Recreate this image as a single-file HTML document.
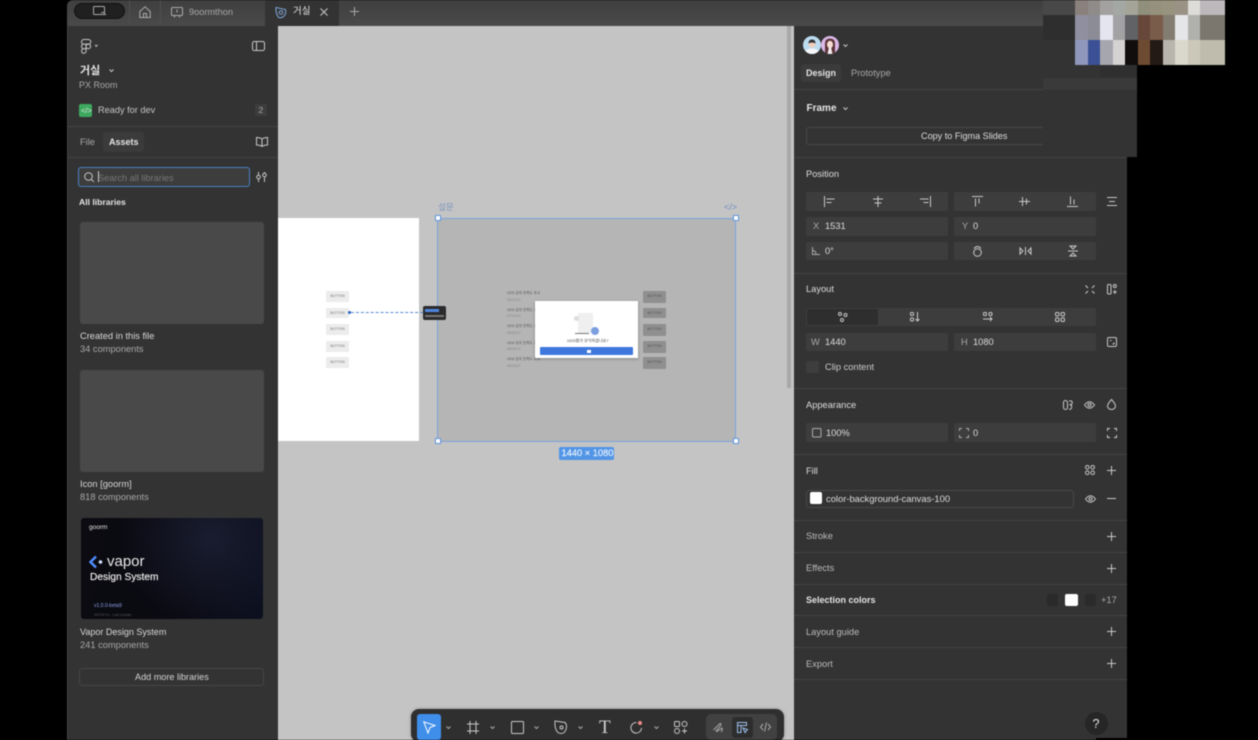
<!DOCTYPE html>
<html lang="ko"><head><meta charset="utf-8"><title>거실 – Figma</title>
<style>
*{box-sizing:border-box}
html,body{margin:0;padding:0;width:1258px;height:740px;background:#000;overflow:hidden}
#w{position:relative;width:1258px;height:740px;overflow:hidden;font-family:"Liberation Sans","Noto Sans CJK KR",sans-serif;filter:blur(.4px)}
.a{position:absolute}
.t{position:absolute;white-space:nowrap;line-height:12px;height:12px;font-size:9.300px;color:#c4c4c4}
.w{color:#e4e4e4}.g{color:#a8a8a8}.b{font-weight:bold}
.d{position:absolute;height:1px;background:#444}
.f{position:absolute;background:#3d3d3d;border-radius:2px}
svg{position:absolute;overflow:visible;fill:none;stroke:#c8c8c8;stroke-width:1}
.btn{position:absolute;background:#ececec;border-radius:1px;color:#777;font-size:3.500px;line-height:10px;text-align:center;width:23px;height:11px}
.gb{background:#8f8f8f;color:#555;height:12px}
.ln{position:absolute;left:507px;font-size:3.500px;color:#555;white-space:nowrap;line-height:5px}
.m{position:absolute}
</style></head><body><div id="w">

<!-- Tab bar -->
<div class="a" style="left:67px;top:0;width:1008px;height:26px;background:linear-gradient(#3f3f3f,#4a4a4a);border-top-left-radius:6px"></div>
<div class="a" style="left:74px;top:3px;width:51px;height:16px;background:#202020;border:1px solid #111;border-radius:8px"></div>
<svg style="left:93px;top:6px;stroke:#aaa" width="14" height="10"><rect x=".5" y=".5" width="11" height="8" rx="1"/><path d="M9 8.500h4M8 6.500h3"/></svg>
<div class="a" style="left:129px;top:0;width:1px;height:26px;background:#4f4f4f"></div>
<div class="a" style="left:160px;top:0;width:1px;height:26px;background:#4f4f4f"></div>
<svg style="left:139px;top:6px;stroke:#aaa" width="12" height="12"><path d="M.8 5.500 6 .8l5.200 4.700v6H.8zM4.500 11.500V7.500h3v4"/></svg>
<svg style="left:171px;top:7px;stroke:#aaa" width="12" height="11"><rect x=".5" y=".5" width="11" height="8" rx="1"/><path d="M6 2.500v3M3.500 8.500v2M8.500 8.500v2"/></svg>
<span class="t g" style="left:189px;top:6px;font-size:9.200px">9oormthon</span>
<div class="a" style="left:265px;top:0;width:74px;height:26px;background:#333"></div>
<svg style="left:275px;top:6px;stroke:#7fa6d8" width="12" height="12"><path d="M1 1.500 10.500 3.500q1 4-1.500 6.500t-5.500 1.500Q.5 7 1 1.500z"/><circle cx="6" cy="6.500" r="1.800"/></svg>
<span class="t w" style="left:293px;top:6px;font-size:9.500px">거실</span>
<svg style="left:320px;top:8px" width="8" height="8"><path d="M.5.500l7 7M7.500.500l-7 7"/></svg>
<svg style="left:350px;top:7px;stroke:#aaa" width="9" height="9"><path d="M4.500 0v9M0 4.500h9"/></svg>

<!-- Left panel -->
<div class="a" style="left:67px;top:26px;width:211px;height:714px;background:#333;border-left:1px solid #444"></div>
<svg style="left:81px;top:38.500px" width="18" height="14"><path d="M.5 2.800A2.300 2.300 0 0 1 2.800.5H7.500a2.300 2.300 0 0 1 0 4.600H2.800A2.300 2.300 0 0 1 .5 2.800zM.5 7.400a2.300 2.300 0 0 1 2.300-2.300H5v4.600H2.800A2.300 2.300 0 0 1 .5 7.400zM5 9.700v1.500a2.300 2.300 0 1 1-2.200-1.500"/><circle cx="7.300" cy="7.400" r="2.300"/><path d="M14 6l1.300 1.300L16.600 6"/></svg>
<svg style="left:252px;top:40.500px" width="13" height="10"><rect x=".5" y=".5" width="12" height="9" rx="1.800"/><path d="M4.500.5v9"/></svg>
<span class="t w b" style="left:80px;top:65px;font-size:11px">거실</span>
<svg style="left:108.500px;top:68.500px" width="5" height="3"><path d="M.5.500 2.500 2.500 4.500.5"/></svg>
<span class="t g" style="left:79px;top:79px;font-size:9px">PX Room</span>
<div class="a" style="left:79px;top:104px;width:13px;height:13px;background:#3ea95e;border-radius:2px"></div>
<span class="t w" style="left:81px;top:104.500px;font-size:7.500px">&lt;/&gt;</span>
<span class="t" style="left:98px;top:104px;font-size:9.200px">Ready for dev</span>
<div class="a" style="left:255px;top:104px;width:12px;height:12px;background:#3d3d3d;border-radius:2px"></div>
<span class="t g" style="left:258.500px;top:104px;font-size:8.500px">2</span>
<div class="d" style="left:68px;top:126px;width:210px"></div>
<span class="t g" style="left:80px;top:136px;font-size:9.300px">File</span>
<div class="a" style="left:103px;top:132px;width:41px;height:20px;background:#3b3b3b;border-radius:3px"></div>
<span class="t w b" style="left:109px;top:136px;font-size:9px">Assets</span>
<svg style="left:256px;top:137px" width="12" height="10"><path d="M6 2Q4 .5.500.5v7.500Q4 8 6 9.500 8 8 11.500 8V.5Q8 .5 6 2zM6 2v7.500"/></svg>
<div class="d" style="left:68px;top:157px;width:210px"></div>
<div class="a" style="left:78px;top:167px;width:172px;height:20px;background:#3d3d3d;border:1px solid #4a80c4;border-radius:3px"></div>
<svg style="left:84px;top:172px" width="10" height="10"><circle cx="4.500" cy="4.500" r="3.800"/><path d="M7.300 7.300 9.800 9.800"/></svg>
<div class="a" style="left:98px;top:171px;width:1px;height:11px;background:#ccc"></div>
<span class="t" style="left:98px;top:171.500px;font-size:9.200px;color:#777">Search all libraries</span>
<svg style="left:256px;top:172px" width="11" height="10"><path d="M2.500 0v3M2.500 7v3M8.500 0v1M8.500 5v5"/><circle cx="2.500" cy="5" r="1.800"/><circle cx="8.500" cy="3" r="1.800"/></svg>
<span class="t w b" style="left:79px;top:196px;font-size:8.600px">All libraries</span>

<div class="a" style="left:80px;top:222px;width:184px;height:102px;background:#494949;border-radius:3px"></div>
<span class="t" style="left:80px;top:330px;font-size:9.300px;color:#d8d8d8">Created in this file</span>
<span class="t g" style="left:80px;top:343px;font-size:9.300px">34 components</span>
<div class="a" style="left:80px;top:370px;width:184px;height:102px;background:#494949;border-radius:3px"></div>
<span class="t" style="left:80px;top:478px;font-size:9.300px;color:#d8d8d8">Icon [goorm]</span>
<span class="t g" style="left:80px;top:491px;font-size:9.300px">818 components</span>

<div class="a" style="left:81px;top:518px;width:182px;height:101px;border-radius:3px;background:radial-gradient(ellipse 90px 90px at 130px 20px,#1a1d30,rgba(10,10,20,0) 100%),linear-gradient(100deg,#0b0b11,#0a0a12 60%,#0d1020)"></div>
<span class="t w" style="left:89px;top:522px;font-size:6.500px">goorm</span>
<svg style="left:89px;top:555px;stroke:#4f8dff;stroke-width:2.500" width="14" height="14"><path d="M7 1.500 1.500 7 7 12.500"/><circle cx="11.500" cy="7" r="1.800" fill="#cfe0ff" stroke="none"/></svg>
<span class="t" style="left:107px;top:556px;font-size:15px;color:#e8e8e8;line-height:12px">vapor</span>
<span class="t" style="left:90px;top:572px;font-size:10.200px;color:#e8e8e8;-webkit-text-stroke:.2px #e8e8e8">Design System</span>
<span class="t" style="left:94px;top:600px;font-size:5px;color:#8ea0e8">v1.0.0-beta9</span>
<span class="t" style="left:94px;top:609px;font-size:3.500px;color:#555">NOTIFYU · Last Update</span>
<span class="t" style="left:80px;top:626px;font-size:9px;color:#d8d8d8">Vapor Design System</span>
<span class="t g" style="left:80px;top:639px;font-size:9.300px">241 components</span>
<div class="a" style="left:79px;top:668px;width:185px;height:18px;border:1px solid #464646;border-radius:3px"></div>
<span class="t" style="left:135px;top:671px;font-size:9.100px;color:#d4d4d4">Add more libraries</span>

<!-- Canvas -->
<div class="a" style="left:278px;top:26px;width:516px;height:714px;background:#c4c4c4"></div>
<div class="a" style="left:278px;top:218px;width:141px;height:223px;background:#fff"></div>
<div class="btn" style="left:326px;top:291px">BUTTON</div>
<div class="btn" style="left:326px;top:308px;height:10px">BUTTON</div>
<div class="btn" style="left:326px;top:324px">BUTTON</div>
<div class="btn" style="left:326px;top:341px">BUTTON</div>
<div class="btn" style="left:326px;top:357px">BUTTON</div>

<div class="a" style="left:437px;top:218px;width:299px;height:223px;background:#b5b5b5"></div>
<div class="ln" style="top:291px">GDS 강의 만족도 조사</div><div class="ln" style="top:298px;color:#888">96/12/12</div>
<div class="ln" style="top:308px">GDS 강의 만족도 조사</div><div class="ln" style="top:314px;color:#888">97/12/19</div>
<div class="ln" style="top:324px">GDS 강의 만족도 조사</div><div class="ln" style="top:331px;color:#888">96/03/27</div>
<div class="ln" style="top:341px">GDS 강의 만족도 조사</div><div class="ln" style="top:347px;color:#888">98/03/12</div>
<div class="ln" style="top:357px">GDS 강의 만족도 조사</div><div class="ln" style="top:364px;color:#888">94/03/27</div>
<div class="btn gb" style="left:643px;top:291px">BUTTON</div>
<div class="btn gb" style="left:643px;top:308px;height:10px">BUTTON</div>
<div class="btn gb" style="left:643px;top:324px">BUTTON</div>
<div class="btn gb" style="left:643px;top:341px">BUTTON</div>
<div class="btn gb" style="left:643px;top:357px">BUTTON</div>
<div class="a" style="left:535px;top:301px;width:103px;height:57px;background:#fff;box-shadow:0 1px 3px rgba(0,0,0,.25)"></div>
<div class="a" style="left:578px;top:313px;width:15px;height:20px;background:#efefef"></div>
<div class="a" style="left:574px;top:316px;width:5px;height:5px;background:#ddd;border-radius:50%"></div>
<div class="a" style="left:575px;top:333px;width:14px;height:1px;background:#777"></div>
<div class="a" style="left:591px;top:327px;width:8px;height:8px;border-radius:50%;background:#7d9fe0"></div>
<span class="t" style="left:567px;top:335px;font-size:4px;color:#444">GDS평가 유익하셨나요?</span>
<div class="a" style="left:540px;top:347px;width:93px;height:8px;background:#3f78dc;border-radius:1px"></div>
<div class="a" style="left:587px;top:349.500px;width:4px;height:3px;background:#fff"></div>

<!-- selection -->
<div class="a" style="left:437px;top:217.500px;width:299px;height:224px;border:1.500px solid #7aa6de"></div>
<div class="a" style="left:435px;top:215px;width:6px;height:6px;background:#fff;border:1px solid #5f95dc"></div>
<div class="a" style="left:732.500px;top:215px;width:6px;height:6px;background:#fff;border:1px solid #5f95dc"></div>
<div class="a" style="left:435px;top:438px;width:6px;height:6px;background:#fff;border:1px solid #5f95dc"></div>
<div class="a" style="left:732.500px;top:438px;width:6px;height:6px;background:#fff;border:1px solid #5f95dc"></div>
<span class="t" style="left:438px;top:201px;font-size:8.500px;color:#7b94bd">설문</span>
<span class="t" style="left:724px;top:201px;font-size:9px;color:#6f8ec4">&lt;/&gt;</span>
<div class="a" style="left:559px;top:447px;width:55px;height:13px;background:#5295e6;border-radius:2px"></div>
<span class="t" style="left:561.500px;top:447px;font-size:9.300px;color:#e4effc;-webkit-text-stroke:.2px #e4effc">1440 × 1080</span>

<!-- connector -->
<div class="a" style="left:351px;top:312px;width:72px;border-top:1px dashed #5a88d0"></div>
<div class="a" style="left:348px;top:311px;width:3px;height:3px;background:#2b62c0;border-radius:50%"></div>
<div class="a" style="left:423px;top:306px;width:23px;height:14px;background:#2a2a2c;border-radius:2px"></div>
<div class="a" style="left:425px;top:309px;width:14px;height:3px;background:#4f86e0"></div>
<div class="a" style="left:425px;top:315px;width:19px;height:2px;background:#777"></div>

<!-- scrollbar -->
<div class="a" style="left:787px;top:26px;width:4px;height:362px;background:#a8a8a8"></div>

<!-- Toolbar -->
<div class="a" style="left:411px;top:709px;width:373px;height:33px;background:#2f2f2f;border-radius:8px;box-shadow:0 0 3px rgba(0,0,0,.3)"></div>
<div class="a" style="left:417px;top:714px;width:24px;height:26px;background:#3f8eea;border-radius:3px"></div>
<svg style="left:423px;top:721px;stroke:#fff" width="13" height="13"><path d="M.8.800 12 4.500 7 6.500 5 12z"/></svg>
<svg style="left:446px;top:726px;stroke:#aaa" width="5" height="3"><path d="M.5.500 2.500 2.500 4.500.5"/></svg>
<svg style="left:467px;top:721px" width="12" height="13"><path d="M3 0v13M9 0v13M0 3h12M0 10h12"/></svg>
<svg style="left:490px;top:726px;stroke:#aaa" width="5" height="3"><path d="M.5.500 2.500 2.500 4.500.5"/></svg>
<svg style="left:511px;top:721px" width="13" height="13"><rect x=".5" y=".5" width="12" height="12" rx="1"/></svg>
<svg style="left:534px;top:726px;stroke:#aaa" width="5" height="3"><path d="M.5.500 2.500 2.500 4.500.5"/></svg>
<svg style="left:554px;top:720px" width="15" height="14"><path d="M1 1 11 2.500q2.500 3 1 7t-5 4q-3.500 0-5-4Q.5 6 1 1z"/><circle cx="7.500" cy="7.500" r="1.500"/></svg>
<svg style="left:578px;top:726px;stroke:#aaa" width="5" height="3"><path d="M.5.500 2.500 2.500 4.500.5"/></svg>
<span class="t" style="left:599px;top:720px;font-family:'Liberation Serif',serif;font-size:19px;color:#d0d0d0;line-height:15px;height:15px">T</span>
<svg style="left:630px;top:721px" width="13" height="13"><path d="M6.500 1.500A5.300 5.300 0 1 0 11.500 7"/></svg>
<div class="a" style="left:638px;top:721px;width:4px;height:4px;background:#ef8a8a;border-radius:50%"></div>
<svg style="left:654px;top:726px;stroke:#aaa" width="5" height="3"><path d="M.5.500 2.500 2.500 4.500.5"/></svg>
<svg style="left:674px;top:721px" width="14" height="13"><rect x=".5" y=".5" width="5" height="5" rx="1"/><circle cx="10.500" cy="3" r="2.500"/><circle cx="3" cy="10" r="2.500"/><path d="M10.500 7.500v5M8 10h5"/></svg>
<div class="a" style="left:706px;top:714px;width:71px;height:26px;background:#414141;border-radius:5px"></div>
<div class="a" style="left:732px;top:717px;width:21px;height:21px;background:#2d2d2d;border-radius:3px"></div>
<svg style="left:713px;top:722px;stroke:#aaa" width="11" height="11"><path d="M.5 8 7 1.500q2 0 0 3L3 9q1 1 3-1l3-2q1 2-1 4"/></svg>
<svg style="left:737px;top:722px;stroke:#9cc0ec" width="11" height="11"><path d="M.5.500h9v3h-9zM.5 3.500v7h4M4 3.500v7M6 6l4.500 1.500-2.500 3z"/></svg>
<svg style="left:760px;top:722px;stroke:#aaa" width="11" height="10"><path d="M3 2 .5 5 3 8M8 2l2.500 3L8 8M6.500 .5l-2 9"/></svg>

<!-- Right panel -->
<div class="a" style="left:794px;top:26px;width:333px;height:714px;background:#333"></div>
<svg style="left:803px;top:36px;stroke:none" width="36" height="18">
<defs><clipPath id="c1"><circle cx="9" cy="9" r="9"/></clipPath><clipPath id="c2"><circle cx="27" cy="9" r="9"/></clipPath></defs>
<g clip-path="url(#c1)"><rect width="18" height="18" fill="#bcdcf0"/><ellipse cx="9" cy="18" rx="8" ry="5.500" fill="#f6f6f8"/><circle cx="9" cy="8" r="3.500" fill="#f0cfba"/><path d="M5.500 7.500Q5.500 3.500 9 3.500t3.500 4Q9 5.500 5.500 7.500z" fill="#2f3036"/></g>
<g clip-path="url(#c2)"><rect x="18" width="18" height="18" fill="#dcb8e8"/><path d="M22 18V7.500Q22 2.500 27 2.500t5 5V18z" fill="#5b3438"/><ellipse cx="27" cy="8.500" rx="3" ry="3.800" fill="#f6dcd2"/><path d="M24.500 18l1.500-7h2l1.500 7z" fill="#f4ecee"/></g></svg>
<svg style="left:843px;top:44px" width="5" height="3"><path d="M.5.500 2.500 2.500 4.500.5"/></svg>
<div class="a" style="left:801px;top:64px;width:40px;height:18px;background:#3b3b3b;border-radius:3px"></div>
<span class="t w b" style="left:806px;top:67px;font-size:9px">Design</span>
<span class="t g" style="left:851px;top:67px;font-size:9.300px">Prototype</span>
<div class="d" style="left:794px;top:89px;width:333px"></div>
<span class="t w b" style="left:806.500px;top:102.500px;font-size:10px">Frame</span>
<svg style="left:843px;top:106.500px" width="5" height="3"><path d="M.5.500 2.500 2.500 4.500.5"/></svg>
<div class="a" style="left:806px;top:127px;width:300px;height:18px;border:1px solid #474747;border-radius:3px"></div>
<span class="t" style="left:921px;top:130px;font-size:9.100px;color:#ddd">Copy to Figma Slides</span>
<div class="d" style="left:794px;top:157px;width:333px"></div>
<span class="t" style="left:806px;top:168px;font-size:9.300px;color:#ddd">Position</span>

<div class="f" style="left:806px;top:192px;width:142px;height:19px"></div>
<div class="f" style="left:954px;top:192px;width:142px;height:19px"></div>
<svg style="left:824px;top:196px" width="12" height="11"><path d="M.5 0v11M2.500 3h8M2.500 6.500h5"/></svg>
<svg style="left:872px;top:196px" width="12" height="11"><path d="M6 0v11M1 3h10M2.500 7h7"/></svg>
<svg style="left:919px;top:196px" width="12" height="11"><path d="M11.500 0v11M1 3h8.500M4.500 6.500h5"/></svg>
<svg style="left:972px;top:196px" width="11" height="11"><path d="M0 .5h11M3.500 2.500v8M7 2.500v5"/></svg>
<svg style="left:1019px;top:196px" width="11" height="11"><path d="M3.500 1v9M7.500 2.500v6M0 5.500h11"/></svg>
<svg style="left:1067px;top:196px" width="11" height="11"><path d="M0 10.500h11M3.500 .5v8M7 3.500v5"/></svg>
<svg style="left:1107px;top:197px" width="10" height="9"><path d="M0 .5h10M0 8.500h10M2 4.500h6"/></svg>

<div class="f" style="left:806px;top:217px;width:142px;height:19px"></div>
<div class="f" style="left:954px;top:217px;width:142px;height:19px"></div>
<span class="t g" style="left:813px;top:220px;font-size:9.300px">X</span>
<span class="t" style="left:825px;top:220px;font-size:9.300px;color:#ddd">1531</span>
<span class="t g" style="left:962px;top:220px;font-size:9.300px">Y</span>
<span class="t" style="left:973px;top:220px;font-size:9.300px;color:#ddd">0</span>
<div class="f" style="left:806px;top:242px;width:142px;height:18px"></div>
<div class="f" style="left:954px;top:242px;width:142px;height:18px"></div>
<svg style="left:812px;top:247px;stroke:#a8a8a8" width="8" height="8"><path d="M.5 0v7.500H8M.5 3.500q3.500 0 3.500 4"/></svg>
<span class="t" style="left:825px;top:245px;font-size:9.300px;color:#ddd">0°</span>
<svg style="left:973px;top:245px" width="9" height="12"><circle cx="4.500" cy="7.500" r="3.800"/><path d="M1 3.500Q4.500-.5 8 3.500"/></svg>
<svg style="left:1020px;top:247px" width="11" height="8"><path d="M5.500 0v8M0 1v6l3-3zM11 1v6L8 4z"/></svg>
<svg style="left:1068px;top:246px" width="10" height="10"><path d="M0 5h10M2 0h6L5 3zM2 10h6L5 7z"/></svg>

<div class="d" style="left:794px;top:273px;width:333px"></div>
<span class="t" style="left:806px;top:283px;font-size:9.300px;color:#ddd">Layout</span>
<svg style="left:1085px;top:285px" width="10" height="9"><path d="M.5.500l2.500 2.500M9.500.500 7 3M.5 8.500 3 6M9.500 8.500 7 6"/></svg>
<svg style="left:1107px;top:284px" width="10" height="11"><rect x=".5" y=".5" width="3.500" height="9.500" rx="1"/><circle cx="7.800" cy="2" r="1.500"/><path d="M7.800 6v4M6 8h3.800"/></svg>
<div class="f" style="left:806px;top:308px;width:290px;height:18px"></div>
<div class="a" style="left:807px;top:309px;width:71px;height:16px;background:#2e2e2e;border-radius:2px"></div>
<svg style="left:838px;top:312px" width="10" height="10"><circle cx="2" cy="2" r="1.500"/><circle cx="7.500" cy="3" r="1.500"/><circle cx="4" cy="8" r="1.500"/></svg>
<svg style="left:910px;top:312px" width="10" height="10"><rect x=".5" y=".5" width="3" height="3" rx="1"/><rect x=".5" y="6" width="3" height="3" rx="1"/><path d="M7.500 0v9M5.500 7l2 2 2-2"/></svg>
<svg style="left:983px;top:312px" width="10" height="10"><rect x=".5" y=".5" width="3" height="3" rx="1"/><rect x="6" y=".5" width="3" height="3" rx="1"/><path d="M0 7h9M7 5l2 2-2 2"/></svg>
<svg style="left:1055px;top:312px" width="10" height="10"><rect x=".5" y=".5" width="3.500" height="3.500" rx="1.200"/><rect x="6" y=".5" width="3.500" height="3.500" rx="1.200"/><rect x=".5" y="6" width="3.500" height="3.500" rx="1.200"/><rect x="6" y="6" width="3.500" height="3.500" rx="1.200"/></svg>
<div class="f" style="left:806px;top:333px;width:142px;height:18px"></div>
<div class="f" style="left:954px;top:333px;width:142px;height:18px"></div>
<span class="t g" style="left:811px;top:336px;font-size:9.300px">W</span>
<span class="t" style="left:825px;top:336px;font-size:9.300px;color:#ddd">1440</span>
<span class="t g" style="left:961px;top:336px;font-size:9.300px">H</span>
<span class="t" style="left:973px;top:336px;font-size:9.300px;color:#ddd">1080</span>
<svg style="left:1107px;top:337px" width="10" height="10"><rect x=".5" y=".5" width="9" height="9" rx="1.500"/><path d="M3 3.500h1.500M5.500 7H7v-1.500"/></svg>
<div class="f" style="left:806px;top:361px;width:13px;height:12px"></div>
<span class="t" style="left:825px;top:361px;font-size:9.300px;color:#ccc">Clip content</span>

<div class="d" style="left:794px;top:388px;width:333px"></div>
<span class="t" style="left:806px;top:399px;font-size:9.300px;color:#ddd">Appearance</span>
<svg style="left:1063px;top:400px" width="11" height="10"><rect x=".5" y=".5" width="4" height="9" rx="2"/><path d="M6 1h2.500q1.500 1.500 0 3.500H6.500q3.500 1 1.500 4.500l-2 .5"/></svg>
<svg style="left:1084px;top:401px" width="11" height="8"><path d="M.5 4Q5.500-2.500 10.500 4 5.500 10.500.5 4z"/><circle cx="5.500" cy="4" r="1.500"/></svg>
<svg style="left:1107px;top:399px" width="9" height="11"><path d="M4.500.5Q.5 5 .5 7a4 3.500 0 0 0 8 0Q8.500 5 4.500.5z"/></svg>
<div class="f" style="left:806px;top:423px;width:142px;height:19px"></div>
<div class="f" style="left:954px;top:423px;width:142px;height:19px"></div>
<svg style="left:812px;top:428px;stroke:#aaa" width="9" height="9"><rect x=".5" y=".5" width="8.500" height="8.500" rx="1"/></svg>
<span class="t" style="left:826px;top:427px;font-size:9.300px;color:#ddd">100%</span>
<svg style="left:959px;top:428px;stroke:#aaa" width="10" height="10"><path d="M.5 3V.5H3M7 .5h2.500V3M9.500 7v2.500H7M3 9.500H.5V7"/></svg>
<span class="t" style="left:973px;top:427px;font-size:9.300px;color:#ddd">0</span>
<svg style="left:1107px;top:428px" width="10" height="10"><path d="M.5 3V.5H3M7 .5h2.500V3M9.500 7v2.500H7M3 9.500H.5V7"/></svg>

<div class="d" style="left:794px;top:454px;width:333px"></div>
<span class="t" style="left:806px;top:465px;font-size:9.300px;color:#ddd">Fill</span>
<svg style="left:1085px;top:465px" width="10" height="10"><circle cx="2.300" cy="2.300" r="1.800"/><circle cx="7.700" cy="2.300" r="1.800"/><circle cx="2.300" cy="7.700" r="1.800"/><circle cx="7.700" cy="7.700" r="1.800"/></svg>
<svg style="left:1107px;top:466px" width="9" height="9"><path d="M4.500 0v9M0 4.500h9"/></svg>
<div class="a" style="left:806px;top:490px;width:268px;height:18px;border:1px solid #474747;border-radius:3px"></div>
<div class="a" style="left:810px;top:492px;width:12px;height:12px;background:#fff;border-radius:2px"></div>
<span class="t" style="left:826px;top:493px;font-size:9.400px;color:#ddd">color-background-canvas-100</span>
<svg style="left:1085px;top:495px" width="11" height="8"><path d="M.5 4Q5.500-2.500 10.500 4 5.500 10.500.5 4z"/><circle cx="5.500" cy="4" r="1.500"/></svg>
<svg style="left:1107px;top:498px" width="9" height="1"><path d="M0 .5h9"/></svg>

<div class="d" style="left:794px;top:520px;width:333px"></div>
<span class="t" style="left:806px;top:530px;font-size:9.300px;color:#bbb">Stroke</span>
<svg style="left:1107px;top:532px" width="9" height="9"><path d="M4.500 0v9M0 4.500h9"/></svg>
<div class="d" style="left:794px;top:552px;width:333px"></div>
<span class="t" style="left:806px;top:562px;font-size:9.300px;color:#bbb">Effects</span>
<svg style="left:1107px;top:564px" width="9" height="9"><path d="M4.500 0v9M0 4.500h9"/></svg>
<div class="d" style="left:794px;top:584px;width:333px"></div>
<span class="t w b" style="left:806px;top:594px;font-size:9px">Selection colors</span>
<div class="a" style="left:1047px;top:594px;width:11px;height:12px;background:#2a2a2a;border-radius:2px"></div>
<div class="a" style="left:1065px;top:594px;width:13px;height:12px;background:#fff;border-radius:2px"></div>
<div class="a" style="left:1085px;top:594px;width:11px;height:12px;background:#2a2a2a;border-radius:2px"></div>
<span class="t g" style="left:1101px;top:594px;font-size:9.300px">+17</span>
<div class="d" style="left:794px;top:615px;width:333px"></div>
<span class="t" style="left:806px;top:626px;font-size:9.300px;color:#bbb">Layout guide</span>
<svg style="left:1107px;top:627px" width="9" height="9"><path d="M4.500 0v9M0 4.500h9"/></svg>
<div class="d" style="left:794px;top:647px;width:333px"></div>
<span class="t" style="left:806px;top:658px;font-size:9.300px;color:#bbb">Export</span>
<svg style="left:1107px;top:659px" width="9" height="9"><path d="M4.500 0v9M0 4.500h9"/></svg>
<div class="d" style="left:794px;top:679px;width:333px"></div>
<div class="a" style="left:1085px;top:712px;width:23px;height:23px;background:#262626;border-radius:50%"></div>
<span class="t w" style="left:1092.500px;top:718px;font-size:12.500px">?</span>
<div class="a" style="left:1096px;top:738px;width:40px;height:2px;background:#000"></div>

<!-- Redaction patch + mosaic -->
<div class="a" style="left:1043px;top:15px;width:94px;height:142px;background:#333"></div>
<div class="a" style="left:1043px;top:15px;width:32px;height:25px;background:#2e2e2e"></div>
<div class="a" style="left:1043px;top:78px;width:94px;height:12px;background:#3a3a3a"></div>
<div class="a" style="left:1100px;top:65px;width:37px;height:13px;background:#2f2f2f"></div>
<div class="a" style="left:1043px;top:0;width:32px;height:15px;background:#484848"></div>
<div class="m" style="left:1075px;top:0;width:150px;height:15px;display:grid;grid-template-columns:repeat(12,12.500px)">
<i style="background:#8a807c"></i><i style="background:#8f8b88"></i><i style="background:#a3a19f"></i><i style="background:#a4a8a5"></i><i style="background:#a4a598"></i><i style="background:#8f8f7c"></i><i style="background:#95917c"></i><i style="background:#98937f"></i><i style="background:#9a9285"></i><i style="background:#dedcd8"></i><i style="background:#bdb8bc"></i><i style="background:#bdb8bc"></i></div>
<div class="m" style="left:1075px;top:15px;width:150px;height:25px;display:grid;grid-template-columns:repeat(12,12.500px)">
<i style="background:#8f8f9f"></i><i style="background:#8b8c96"></i><i style="background:#e4e5ee"></i><i style="background:#a2a1a3"></i><i style="background:#606266"></i><i style="background:#66473a"></i><i style="background:#7a5c4a"></i><i style="background:#837c70"></i><i style="background:#e5e6e8"></i><i style="background:#b0b0ac"></i><i style="background:#7b776f"></i><i style="background:#7b776f"></i></div>
<div class="m" style="left:1075px;top:40px;width:150px;height:25px;display:grid;grid-template-columns:repeat(12,12.500px)">
<i style="background:#8f97bd"></i><i style="background:#3c5095"></i><i style="background:#a6a7ae"></i><i style="background:#d5d3d1"></i><i style="background:#120d0d"></i><i style="background:#6d4a32"></i><i style="background:#231a15"></i><i style="background:#b7b5ac"></i><i style="background:#dad8cc"></i><i style="background:#cbc8ba"></i><i style="background:#bfbcae"></i><i style="background:#bfbcae"></i></div>
</div></body></html>
